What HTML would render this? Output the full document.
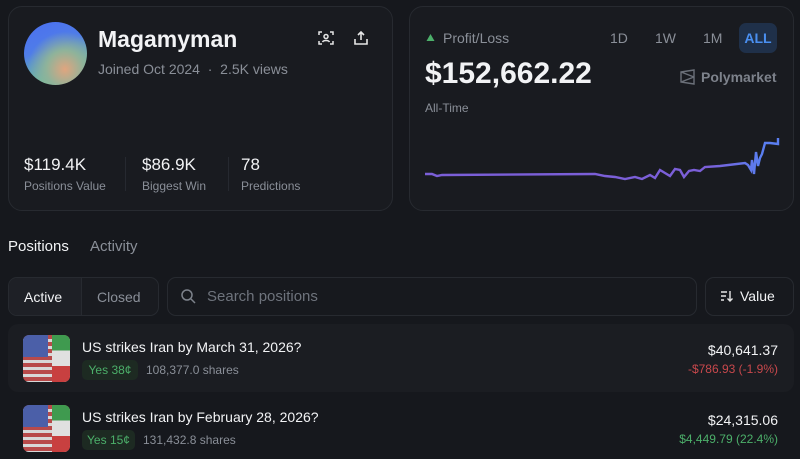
<!DOCTYPE html>
<html><head><style>
*{margin:0;padding:0;box-sizing:border-box}
body{width:800px;height:459px;background:#16181d;font-family:"Liberation Sans",sans-serif;color:#f2f3f5;position:relative;overflow:hidden}
.card{position:absolute;background:#191b20;border:1px solid #272a30;border-radius:14px}
.abs{position:absolute;white-space:nowrap}
.grey{color:#8a8f98}
.r{right:22px;text-align:right}
</style></head><body>
<div class="card" style="left:8px;top:6px;width:385px;height:205px"></div>
<div class="card" style="left:409px;top:6px;width:385px;height:205px"></div>
<div class="abs" style="left:24px;top:22px;width:63px;height:63px;border-radius:50%;background:radial-gradient(circle at 65% 75%,#e0a57f 0%,#8fb39a 30%,transparent 60%),linear-gradient(160deg,#4b6ff0 0%,#4f7de8 40%,#6cc39a 80%)"></div>
<div class="abs" style="left:98px;top:26px;font-size:23px;font-weight:bold">Magamyman</div>
<div class="abs grey" style="left:98px;top:61px;font-size:14px">Joined Oct 2024 &nbsp;·&nbsp; 2.5K views</div>
<svg class="abs" style="left:318px;top:30px" width="16" height="16" viewBox="0 0 16 16" fill="none" stroke="#e6e6e6" stroke-width="1.5"><path d="M1 5V2h3M12 2h3v3M15 11v3h-3M4 14H1v-3"/><circle cx="8" cy="6.5" r="2"/><path d="M4.5 12c1-2 6-2 7 0"/></svg>
<svg class="abs" style="left:353px;top:30px" width="16" height="16" viewBox="0 0 16 16" fill="none" stroke="#e6e6e6" stroke-width="1.6"><path d="M8 10V2M5 5l3-3 3 3M2 9v5h12V9"/></svg>
<div class="abs" style="left:24px;top:155px;font-size:17px">$119.4K</div>
<div class="abs grey" style="left:24px;top:179px;font-size:12px">Positions Value</div>
<div class="abs" style="left:125px;top:157px;width:1px;height:34px;background:#262930"></div>
<div class="abs" style="left:142px;top:155px;font-size:17px">$86.9K</div>
<div class="abs grey" style="left:142px;top:179px;font-size:12px">Biggest Win</div>
<div class="abs" style="left:228px;top:157px;width:1px;height:34px;background:#262930"></div>
<div class="abs" style="left:241px;top:155px;font-size:17px">78</div>
<div class="abs grey" style="left:241px;top:179px;font-size:12px">Predictions</div>

<svg class="abs" style="left:426px;top:33px" width="9" height="9"><path d="M4.5 1L8.5 8H0.5Z" fill="#4caf6a"/></svg>
<div class="abs grey" style="left:443px;top:30px;font-size:14px">Profit/Loss</div>
<div class="abs grey" style="left:610px;top:30px;font-size:14px">1D</div>
<div class="abs grey" style="left:655px;top:30px;font-size:14px">1W</div>
<div class="abs grey" style="left:703px;top:30px;font-size:14px">1M</div>
<div class="abs" style="left:739px;top:23px;width:38px;height:30px;border-radius:7px;background:#1f3049;color:#4a8ff0;font-size:14px;font-weight:bold;text-align:center;line-height:30px">ALL</div>
<div class="abs" style="left:425px;top:57px;font-size:30px;font-weight:bold">$152,662.22</div>
<svg class="abs" style="left:680px;top:69px" width="15" height="16" viewBox="0 0 15 16" fill="none" stroke="#6b7079" stroke-width="1.4"><path d="M1 3l13-2v14L1 13zM1 3l13 5M1 13l13-5"/></svg>
<div class="abs" style="left:701px;top:69px;font-size:14px;color:#7d828b;font-weight:bold">Polymarket</div>
<div class="abs grey" style="left:425px;top:101px;font-size:12px">All-Time</div>
<svg class="abs" style="left:0;top:0" width="800" height="220">
<defs><linearGradient id="l" x1="0" y1="0" x2="1" y2="0"><stop offset=".8" stop-color="#7b5fd8"/><stop offset=".95" stop-color="#5a7ef0"/></linearGradient></defs>
<path d="M425 174L432 174L437 176L442 175L595 174L605 176L615 177L625 179L635 177L642 179L650 175L655 178L660 170L665 173L670 176L675 169L680 170L684 177L689 171L694 170L700 171L705 167L720 166L745 163L748 165L751 170L752 160L754 174L756 152L758 166L760 158L762 154L765 143L770 143L778 144L778 138"
 fill="none" stroke="url(#l)" stroke-width="2.4"/>
</svg>

<div class="abs" style="left:8px;top:238px;font-size:15px">Positions</div>
<div class="abs grey" style="left:90px;top:238px;font-size:15px">Activity</div>
<div class="abs" style="left:8px;top:277px;width:151px;height:39px;border:1px solid #272a30;border-radius:9px;background:#191b20;overflow:hidden"><div style="position:absolute;left:0;top:0;width:73px;height:39px;background:#1e2026;border-right:1px solid #272a30"></div></div>
<div class="abs" style="left:24px;top:289px;font-size:14px">Active</div>
<div class="abs grey" style="left:97px;top:289px;font-size:14px">Closed</div>
<div class="abs" style="left:167px;top:277px;width:530px;height:39px;border:1px solid #272a30;border-radius:9px;background:#17191e"></div>
<svg class="abs" style="left:180px;top:288px" width="16" height="16" viewBox="0 0 16 16" fill="none" stroke="#7d828b" stroke-width="1.5"><circle cx="7" cy="7" r="5"/><path d="M11 11l4 4"/></svg>
<div class="abs" style="left:207px;top:288px;font-size:15px;color:#6e737c">Search positions</div>
<div class="abs" style="left:705px;top:277px;width:89px;height:39px;border:1px solid #272a30;border-radius:9px;background:#17191e"></div>
<svg class="abs" style="left:720px;top:290px" width="14" height="12" viewBox="0 0 14 12" fill="none" stroke="#e6e6e6" stroke-width="1.4"><path d="M1 2h6M1 6h5M1 10h3M10 1v10M7.5 8.5L10 11l2.5-2.5"/></svg>
<div class="abs" style="left:740px;top:288px;font-size:14px">Value</div>

<div class="abs" style="left:8px;top:324px;width:786px;height:68px;background:#1b1d22;border-radius:10px"></div>
<div class="abs" style="left:23px;top:335px;width:47px;height:47px;border-radius:6px;background:repeating-linear-gradient(180deg,#b84a4a 0 4px,#d8d8d8 4px 7px);overflow:hidden"><div style="position:absolute;left:0;top:0;width:25px;height:22px;background:#4b5fa8"></div><div style="position:absolute;left:29px;top:0;width:18px;height:47px;background:linear-gradient(180deg,#3f9a4f 0 33%,#e0e0e0 33% 66%,#c84040 66%)"></div></div>
<div class="abs" style="left:82px;top:339px;font-size:14px">US strikes Iran by March 31, 2026?</div>
<div class="abs" style="left:82px;top:360px;width:56px;height:20px;border-radius:5px;background:#1d2a22;color:#4caf6a;font-size:12px;text-align:center;line-height:20px">Yes 38¢</div>
<div class="abs grey" style="left:146px;top:363px;font-size:12px">108,377.0 shares</div>
<div class="abs r" style="top:342px;font-size:14px">$40,641.37</div>
<div class="abs r" style="top:362px;font-size:12px;color:#c8484c">-$786.93 (-1.9%)</div>

<div class="abs" style="left:23px;top:405px;width:47px;height:47px;border-radius:6px;background:repeating-linear-gradient(180deg,#b84a4a 0 4px,#d8d8d8 4px 7px);overflow:hidden"><div style="position:absolute;left:0;top:0;width:25px;height:22px;background:#4b5fa8"></div><div style="position:absolute;left:29px;top:0;width:18px;height:47px;background:linear-gradient(180deg,#3f9a4f 0 33%,#e0e0e0 33% 66%,#c84040 66%)"></div></div>
<div class="abs" style="left:82px;top:409px;font-size:14px">US strikes Iran by February 28, 2026?</div>
<div class="abs" style="left:82px;top:430px;width:53px;height:20px;border-radius:5px;background:#1d2a22;color:#4caf6a;font-size:12px;text-align:center;line-height:20px">Yes 15¢</div>
<div class="abs grey" style="left:143px;top:433px;font-size:12px">131,432.8 shares</div>
<div class="abs r" style="top:412px;font-size:14px">$24,315.06</div>
<div class="abs r" style="top:432px;font-size:12px;color:#4caf6a">$4,449.79 (22.4%)</div>
</body></html>
